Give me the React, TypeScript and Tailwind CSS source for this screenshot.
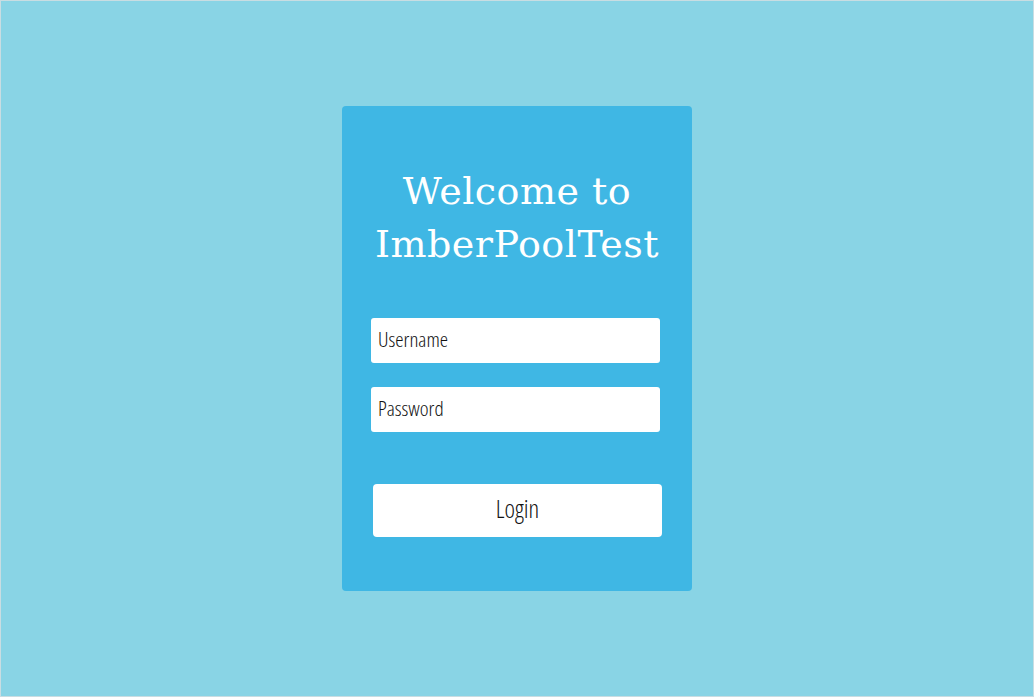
export default function App() {
  return (
    <div className="flex min-h-[697px] w-full items-center justify-center border border-[#c9dde2] bg-[#89d4e5]">
      <div className="flex h-[485px] w-[350px] flex-col items-center rounded-[4px] bg-[#3fb7e4] px-[29px] pt-[59px]">
        <h1
          className="text-center text-[38px] leading-[53px] tracking-[0.5px] text-white"
          style={{ fontFamily: '"DejaVu Serif", serif' }}
        >
          Welcome to
          <br />
          ImberPoolTest
        </h1>
        <form className="mt-[47px] flex w-full flex-col" style={{ fontFamily: '"Open Sans", sans-serif' }}>
          <input
            type="text"
            placeholder="Username"
            className="h-[45px] w-[289px] rounded-[3px] bg-white px-[7px] pb-[4px] text-[21px] font-light text-[#111] outline-none placeholder:text-[#111] [font-stretch:75%]"
          />
          <input
            type="password"
            placeholder="Password"
            className="mt-[24px] h-[45px] w-[289px] rounded-[3px] bg-white px-[7px] pb-[4px] text-[21px] font-light text-[#111] outline-none placeholder:text-[#111] [font-stretch:75%]"
          />
          <button
            type="button"
            className="ml-[2px] mt-[52px] h-[53px] w-[289px] rounded-[4px] bg-white pb-[3px] text-[25px] font-light text-[#111] [font-stretch:75%]"
          >
            Login
          </button>
        </form>
      </div>
    </div>
  )
}
